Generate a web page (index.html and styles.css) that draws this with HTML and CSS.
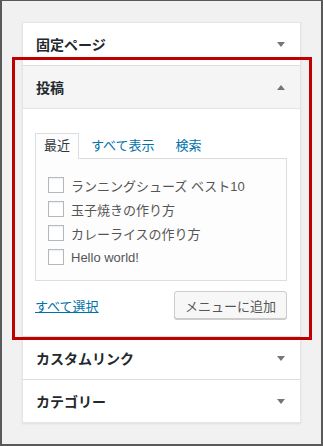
FILE: index.html
```html
<!DOCTYPE html>
<html lang="ja">
<head>
  <meta charset="UTF-8" />
  <title>メニュー項目を追加</title>
  <link rel="stylesheet" href="styles.css">
</head>
<body>
  <div class="screen">
    <div class="menu-box">
      <div class="section">
        <h3 class="section-title">固定ページ<span class="arrow"></span></h3>
      </div>
      <div class="section open">
        <h3 class="section-title">投稿<span class="arrow up"></span></h3>
        <div class="section-body">
          <ul class="tabs">
            <li class="active">最近</li>
            <li><a href="#">すべて表示</a></li>
            <li><a href="#">検索</a></li>
          </ul>
          <div class="tab-panel">
            <ul class="items">
              <li><label><input type="checkbox" /> ランニングシューズ ベスト10</label></li>
              <li><label><input type="checkbox" /> 玉子焼きの作り方</label></li>
              <li><label><input type="checkbox" /> カレーライスの作り方</label></li>
              <li><label><input type="checkbox" /> Hello world!</label></li>
            </ul>
          </div>
          <div class="actions">
            <a href="#" class="select-all">すべて選択</a>
            <button class="add-btn">メニューに追加</button>
          </div>
        </div>
      </div>
      <div class="section">
        <h3 class="section-title">カスタムリンク<span class="arrow"></span></h3>
      </div>
      <div class="section last">
        <h3 class="section-title">カテゴリー<span class="arrow"></span></h3>
      </div>
    </div>
    <div class="highlight"></div>
  </div>
</body>
</html>
```

FILE: styles.css
```css
* {
  box-sizing: border-box;
}

body {
  margin: 0;
  font-family: "Liberation Sans", "Noto Sans CJK JP", sans-serif;
  font-size: 13px;
  color: #32373c;
}

.screen {
  position: relative;
  width: 323px;
  height: 446px;
  background: #f1f1f1;
  border: solid #595959;
  border-width: 1px 2px 2px 2px;
  padding: 21px 20px 0 20px;
}

.menu-box {
  background: #fff;
  border: 1px solid #e5e5e5;
  box-shadow: 0 1px 2px rgba(0, 0, 0, 0.08);
}

.section-title {
  margin: 0;
  height: 43px;
  padding: 0 15px 0 13px;
  display: flex;
  align-items: center;
  justify-content: space-between;
  font-size: 14px;
  font-weight: bold;
  color: #23282d;
  border-bottom: 1px solid #ddd;
}

.section.last .section-title {
  border-bottom: none;
  height: 42px;
}

.section.open .section-title {
  background: #f5f5f5;
  border-bottom-color: #e5e5e5;
}

.arrow {
  width: 0;
  height: 0;
  border-left: 4px solid transparent;
  border-right: 4px solid transparent;
  border-top: 5px solid #72777c;
}

.arrow.up {
  border-top: none;
  border-bottom: 5px solid #72777c;
}

.section-body {
  padding: 24px 13px 17px 12px;
  border-bottom: 1px solid #ddd;
}

.tabs {
  list-style: none;
  margin: 0 0 -1px 0;
  padding: 0;
  display: flex;
  position: relative;
}

.tabs li {
  padding: 5px 8px 6px;
  line-height: 14px;
  margin-right: 3px;
  border: 1px solid transparent;
  border-bottom: none;
}

.tabs li.active {
  background: #fdfdfd;
  border-color: #ddd;
  color: #32373c;
}

.tabs a {
  color: #0073aa;
  text-decoration: none;
}

.tab-panel {
  background: #fdfdfd;
  border: 1px solid #ddd;
  padding: 14px 12px 11px;
}

.items {
  list-style: none;
  margin: 0;
  padding: 0;
}

.items li {
  height: 24px;
  display: flex;
  align-items: center;
}

.items label {
  display: flex;
  align-items: center;
  gap: 7px;
  color: #555;
  font-size: 13px;
}

.items input {
  appearance: none;
  -webkit-appearance: none;
  margin: 0;
  width: 16px;
  height: 16px;
  border: 1px solid #b4b9be;
  background: #fff;
  box-shadow: inset 0 1px 2px rgba(0, 0, 0, 0.07);
}

.actions {
  margin-top: 10px;
  display: flex;
  justify-content: space-between;
  align-items: center;
}

.select-all {
  color: #0073aa;
  text-decoration: underline;
  font-size: 13px;
}

.add-btn {
  height: 28px;
  padding: 0 10px;
  font-family: inherit;
  font-size: 13px;
  color: #555;
  background: #f7f7f7;
  border: 1px solid #ccc;
  border-radius: 3px;
  box-shadow: 0 1px 0 #ccc;
}

.highlight {
  position: absolute;
  left: 10px;
  top: 56px;
  width: 300px;
  height: 283px;
  border: 3px solid #c00000;
  pointer-events: none;
}
```
